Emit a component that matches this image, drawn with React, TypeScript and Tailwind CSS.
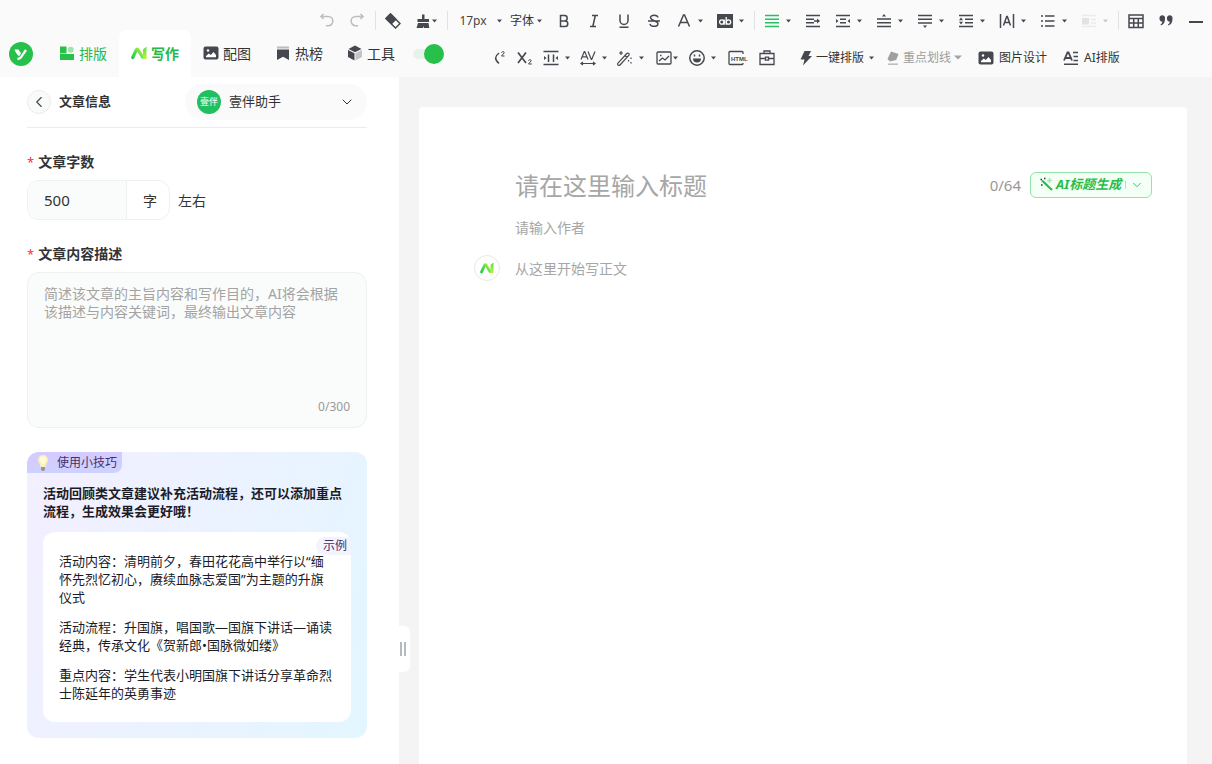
import React, { useState } from 'react';
import { ChevronDown, ChevronLeft } from 'lucide-react';

const INK = '#46484f';

const Svg = ({ children, w = 16, h = 16 }: any) => (
  <svg width={w} height={h} viewBox={`0 0 ${w} ${h}`} fill="none" stroke={INK} strokeWidth="1.5" className="shrink-0">
    {children}
  </svg>
);

const Caret = ({ className = 'text-[#46484f]' }: any) => (
  <svg width="5" height="4" viewBox="0 0 5 4" className={`shrink-0 ${className}`}><path d="M0 .5h5L2.500 3.500z" fill="currentColor" /></svg>
);

const BigCaret = () => (
  <svg width="8" height="5" viewBox="0 0 8 5" className="shrink-0"><path d="M0 .5h8L4 4.500z" fill="#a3a3a3" /></svg>
);

const Sep = () => <span className="flex h-5 w-1.5 shrink-0 justify-center"><span className="w-px bg-[#dfe1e6]" /></span>;

const Tool = ({ label, children }: any) => (
  <button type="button" aria-label={label} className="flex h-5 w-[30px] shrink-0 items-center justify-center">{children}</button>
);

const DropTool = ({ label, children, disabled }: any) => (
  <button type="button" aria-label={label} disabled={disabled} className="flex h-5 w-[41px] shrink-0 items-center gap-1.5 pl-[7px]">
    {children}
    <Caret className={disabled ? 'text-[#c8c8c8]' : 'text-[#46484f]'} />
  </button>
);

const DropToolSm = ({ label, children }: any) => (
  <button type="button" aria-label={label} className="flex h-5 w-[37px] shrink-0 items-center gap-1.5 pl-[5px]">
    {children}
    <Caret />
  </button>
);

// the two-stroke "AI" brand mark
const AiMark = ({ id, size = 16 }: any) => (
  <svg width={size} height={size} viewBox="0 0 16 16" fill="none" className="shrink-0">
    <defs>
      <linearGradient id={id + 'a'} x1="0" y1="14" x2="12" y2="4" gradientUnits="userSpaceOnUse">
        <stop stopColor="#1fc24a" /><stop offset=".45" stopColor="#42dc50" /><stop offset="1" stopColor="#c9f03c" />
      </linearGradient>
      <linearGradient id={id + 'b'} x1="0" y1="2" x2="0" y2="14" gradientUnits="userSpaceOnUse">
        <stop stopColor="#5fe04a" /><stop offset="1" stopColor="#c4ee3a" />
      </linearGradient>
    </defs>
    <path d="M1.800 12.500 5.300 5q.9-1.700 1.900 0l4.300 7" stroke={`url(#${id}a)`} strokeWidth="3.200" strokeLinecap="round" />
    <path d="M12 4.200 15.500 1.800V13.900h-3.500z" fill={`url(#${id}b)`} />
  </svg>
);

const PictureIcon = () => (
  <Svg>
    <rect x=".5" y="1.500" width="15" height="13" rx="2" fill={INK} stroke="none" />
    <circle cx="5" cy="5.500" r="1.200" fill="#fff" stroke="none" />
    <path d="M3 12.200V11l2.800-2.600 2 1.600L10.500 7 13 10v2.200z" fill="#fff" stroke="none" />
  </Svg>
);

const TABS = [
  {
    name: '排版', color: 'text-[#26b94a]',
    icon: (
      <Svg>
        <g stroke="none">
          <path d="M1 1.500h6.500v6.500H1zM1 9h14v6H1z" fill="#27c04a" />
          <circle cx="11.700" cy="4.700" r="3" fill="#9fe3ad" />
          <path d="M1 8h6.500v1H1z" fill="#9fe3ad" />
        </g>
      </Svg>
    ),
  },
  { name: '写作', color: 'text-[#26b94a]', icon: <AiMark id="tab" /> },
  { name: '配图', color: 'text-[#333]', icon: <PictureIcon /> },
  {
    name: '热榜', color: 'text-[#333]',
    icon: <Svg><path d="M2 1.500h12v2H2z" fill="#bbb" stroke="none" /><path d="M2 4.500h12V15l-6-3.200L2 15z" fill={INK} stroke="none" /></Svg>,
  },
  {
    name: '工具', color: 'text-[#333]',
    icon: (
      <Svg>
        <g stroke="none">
          <path d="M8 .5 14.500 4 8 7.300 1.500 4z" fill={INK} />
          <path d="M1 5l6.500 3.300V15.500L1 12z" fill={INK} />
          <path d="M15 5 8.500 8.300V15.500L15 12z" fill="#c4c4c4" />
        </g>
      </Svg>
    ),
  },
];

const EXAMPLES = [
  '活动内容：清明前夕，春田花花高中举行以“缅怀先烈忆初心，赓续血脉志爱国”为主题的升旗仪式',
  '活动流程：升国旗，唱国歌—国旗下讲话—诵读经典，传承文化《贺新郎•国脉微如缕》',
  '重点内容：学生代表小明国旗下讲话分享革命烈士陈延年的英勇事迹',
];

function TopTools() {
  return (
    <div className="flex h-[30px] items-center justify-end overflow-hidden pt-3 pr-px">
      <Tool label="撤销"><Svg><path d="M2.500 3.500h6.800a4.600 4.600 0 0 1 0 9.200H7M4.500 1 2 3.500 4.500 6" stroke="#bdbdbd" /></Svg></Tool>
      <Tool label="重做"><Svg><path d="M13.500 3.500H6.700a4.600 4.600 0 0 0 0 9.200H9M11.500 1 14 3.500 11.500 6" stroke="#bdbdbd" /></Svg></Tool>
      <Sep />
      <Tool label="清除格式">
        <Svg><path d="M1 5.500 5.500 1 15 10.500 10.500 15z" fill="#fff" /><path d="M1 5.500 5.500 1l5.300 5.300-4.500 4.500z" fill={INK} /></Svg>
      </Tool>
      <button type="button" aria-label="格式刷" className="flex h-5 w-9 shrink-0 items-center gap-px pl-[7px]">
        <Svg><path d="M7 1.500h2.500V6H14v3H2.500V6H7zM3 10h10.500l.8 5H9l-1-2v2H1.500z" fill={INK} stroke="none" /></Svg>
        <Caret />
      </button>
      <Sep />
      <button type="button" className="flex h-5 w-[60px] shrink-0 items-center gap-2.5 pl-[9px] text-[12px] text-[#444]"><span className="w-7">17px</span><Caret /></button>
      <button type="button" className="flex h-5 w-[39px] shrink-0 items-center gap-[3px] text-[12px] text-[#333]">字体<Caret /></button>
      <Tool label="加粗"><Svg><path d="M4.500 2.500h4a2.700 2.700 0 0 1 0 5.400h-4zM4.500 7.900H9a2.800 2.800 0 0 1 0 5.600H4.500z" /></Svg></Tool>
      <Tool label="斜体"><Svg><path d="M6 2.500h6M4 13.500h6M9.300 2.500l-2.500 11" /></Svg></Tool>
      <Tool label="下划线"><Svg><path d="M4 1.500v6a4 4 0 0 0 8 0v-6M3.500 14.200h9" /></Svg></Tool>
      <Tool label="删除线"><Svg><path d="M12 4.500C11.500 1.500 4.500 1.300 4.500 4.600 4.500 8 12 7.400 12 10.800c0 3.500-7.500 3.300-8 0M2 8h12" /></Svg></Tool>
      <DropTool label="文字颜色"><Svg><path d="M2.500 13.500 7.500 2h1l5 11.500M4.500 9.500h7" /></Svg></DropTool>
      <DropTool label="背景色">
        <Svg>
          <rect x="0" y="1" width="16" height="14" fill={INK} stroke="none" />
          <g stroke="#fff" strokeWidth="1.300"><circle cx="4.800" cy="9" r="2.200" /><path d="M7.200 6.500v5.200M9.200 4v7.700" /><circle cx="11.500" cy="9" r="2.200" /></g>
        </Svg>
      </DropTool>
      <Sep />
      <DropTool label="对齐"><Svg><path d="M1 2.500h14M1 6.200h14M1 9.800h14M1 13.500h14" stroke="#26bf62" /></Svg></DropTool>
      <Tool label="首行缩进"><Svg><path d="M1 2.500h14M1 6.200h8M1 9.800h8M1 13.500h14M9 8h4" /><path d="M12 5.500 15 8l-3 2.500z" fill={INK} stroke="none" /></Svg></Tool>
      <DropTool label="两端缩进"><Svg><path d="M1 2.500h14M5 6.200h6M5 9.800h6M1 13.500h14" /><path d="M1 6l2.500 2L1 10zM15 6l-2.500 2 2.500 2z" fill={INK} stroke="none" /></Svg></DropTool>
      <DropTool label="段前距"><Svg><path d="M1 6h14M1 9.700h14M1 13.400h14" /><path d="M8 1l2 2.500H6z" fill={INK} stroke="none" /></Svg></DropTool>
      <DropTool label="段后距"><Svg><path d="M1 2.500h14M1 6.200h14M1 9.900h14" /><path d="M8 15l2-2.500H6z" fill={INK} stroke="none" /></Svg></DropTool>
      <DropTool label="行间距"><Svg><path d="M1 2.500h14M7 6.200h8M7 9.800h8M1 13.500h14" /><path d="M3 4.500 5 7.300H1zM3 11.500 5 8.700H1z" fill={INK} stroke="none" /></Svg></DropTool>
      <DropTool label="字间距"><Svg><path d="M1.500 1v14M14.500 1v14M4.500 12.500 7.700 3.500h.6l3.200 9M5.800 9.500h4.400" /></Svg></DropTool>
      <DropTool label="列表"><Svg><path d="M5 3h9.500M5 8h9.500M5 13h9.500M1 3h2M1 8h2M1 13h2" /></Svg></DropTool>
      <DropTool label="浮动" disabled><Svg><path d="M1 2.500h14M10 6.500h5M10 10h5M1 13.500h14" stroke="#ececec" /><path d="M1 5h7v6.500H1z" fill="#e2e2e2" stroke="none" /></Svg></DropTool>
      <Sep />
      <Tool label="表格"><Svg><path d="M1 2h14v12.500H1zM1 5.500h14M1 10h14M5.700 5.500v9M10.300 5.500v9" /></Svg></Tool>
      <Tool label="引用"><Svg><path d="M1.500 5.500a2.800 2.800 0 1 1 5.500 0c0 4-1.500 6-4 7l-.5-1c1.200-.8 1.700-1.700 1.800-3A2.700 2.700 0 0 1 1.500 5.500zM9 5.500a2.800 2.800 0 1 1 5.500 0c0 4-1.500 6-4 7l-.5-1c1.200-.8 1.700-1.700 1.800-3A2.700 2.700 0 0 1 9 5.500z" fill={INK} stroke="none" /></Svg></Tool>
      <Tool label="分割线"><Svg><path d="M1 9h14" strokeWidth="2" /></Svg></Tool>
    </div>
  );
}

function BottomTools() {
  return (
    <div className="ml-[50px] flex items-center overflow-hidden pt-2 text-[12px] whitespace-nowrap text-[#333]">
      <button type="button" aria-label="上标" className="flex h-5 w-3 shrink-0 items-center">
        <Svg w={12}><path d="M5 3C.5 6.500.5 9.500 5 13.500" /><path d="M7.500 2.700c.3-1.500 3-1.300 2.700.2L7.500 6h3" strokeWidth="1" /></Svg>
      </button>
      <button type="button" aria-label="下标" className="flex h-5 w-8 shrink-0 items-center justify-end pr-[5px]">
        <Svg><path d="M1 2.500l8 10.500M9 2.500 1 13" strokeWidth="1.700" /><path d="M11.500 10.700c.3-1.500 3-1.300 2.700.2L11.500 14h3.300" strokeWidth="1" /></Svg>
      </button>
      <DropToolSm label="页边距"><Svg><path d="M.5 1.500h15M.5 14.500h15M5.500 4.500v7.500M10.500 4.500v7.500" /><path d="M1 6l2.500 2L1 10zM15 6l-2.500 2 2.500 2z" fill={INK} stroke="none" /></Svg></DropToolSm>
      <DropToolSm label="字距"><Svg><path d="M1 9.500 4.300 1.500h.4l3.300 8M2.300 6.800h4.400M8 1.500l3.300 8h.4l3.300-8" strokeWidth="1.200" /><path d="M1 13.500h14M3 12l-2 1.500L3 15M13 12l2 1.500-2 1.500" strokeWidth="1.200" /></Svg></DropToolSm>
      <DropToolSm label="魔法棒"><Svg><path d="M1 13.200 9.800 3.500a1.300 1.300 0 0 1 2 1.800L3 15a1.300 1.300 0 0 1-2-1.800zM8 5.500l2 1.800" strokeWidth="1.200" /><path d="M4 1v4M2 3h4M11.500 10v1.500M14 7.500V9M14 12v1.500" strokeWidth="1.200" /></Svg></DropToolSm>
      <button type="button" aria-label="图片" className="flex h-5 w-[35px] shrink-0 items-center justify-center gap-px">
        <Svg><rect x="1" y="2" width="14" height="12" rx="1" strokeWidth="1.300" /><path d="M3 11l3.500-3 2.500 2 4-4" strokeWidth="1.300" /><path d="M4 5.500h1.500" /></Svg>
        <Caret />
      </button>
      <DropToolSm label="表情"><Svg><circle cx="8" cy="8" r="7.200" /><path d="M4 8.500h8a4 4 0 0 1-8 0z" fill={INK} stroke="none" /><path d="M5.500 4.500V6.500M10.500 4.500V6.500" /></Svg></DropToolSm>
      <button type="button" aria-label="HTML" className="flex h-5 w-[34px] shrink-0 items-center justify-center">
        <Svg w={22}><path d="M16 4V2.500a1 1 0 0 0-1-1H3a1 1 0 0 0-1 1v11a1 1 0 0 0 1 1h12a1 1 0 0 0 1-1V13" strokeWidth="1.300" /><text x="4" y="11" fontSize="6" fontWeight="700" fontFamily="Liberation Sans" fill={INK} stroke="none">HTML</text></Svg>
      </button>
      <button type="button" aria-label="工具箱" className="flex h-5 w-6 shrink-0 items-center justify-center">
        <Svg><path d="M1 3.500h14v11H1zM5 3.500V1h6v2.500M1 8.500h5.500M9.500 8.500H15M6.500 7.200h3v3h-3z" strokeWidth="1.300" /></Svg>
      </button>
      <button type="button" className="ml-5 flex shrink-0 items-center gap-px">
        <Svg><path d="M5.500 1h6.500L9.500 6H13L4 15.500 5.500 9.500H1.500z" fill={INK} stroke="none" /></Svg>
        <span>一键排版</span>
        <span className="pl-1"><Caret /></span>
      </button>
      <button type="button" className="ml-3 flex shrink-0 items-center gap-px text-[#9c9c9c]">
        <Svg><path d="M5 1.500 12.500 4l-2.300 6L4 11.500 1.500 9z" fill="#a0a0a0" stroke="none" /><path d="M2 14.200h10" stroke="#bbb" /></Svg>
        <span>重点划线</span>
        <span className="pl-0.5"><BigCaret /></span>
      </button>
      <button type="button" className="ml-4 flex shrink-0 items-center gap-[5px]"><PictureIcon /><span>图片设计</span></button>
      <button type="button" className="ml-4 flex shrink-0 items-center gap-[5px]">
        <Svg><path d="M1 10.500 4.500 2.500h1l3.500 8M2.500 8h5" strokeWidth="1.800" /><path d="M10 2.500h5M10.500 6.500H15M10.500 10.500H15M1 14.200h14" /></Svg>
        <span>AI排版</span>
      </button>
    </div>
  );
}

function Sidebar() {
  const [count, setCount] = useState('500');
  const [desc, setDesc] = useState('');
  return (
    <aside className="w-[400px] shrink-0 border-r border-[#f4f4f4] bg-white pt-[7px] pr-8 pb-[26px] pl-[27px]">
      <div className="flex items-center justify-between border-b border-[#ececec] pb-[7px]">
        <div className="flex items-center gap-2">
          <button type="button" aria-label="返回" className="flex h-6 w-6 items-center justify-center rounded-full border border-[#ececec] bg-[#f9fbfa]">
            <ChevronLeft className="h-[18px] w-[18px] text-[#444]" strokeWidth={1.500} />
          </button>
          <h1 className="text-[13px] font-bold text-[#333]">文章信息</h1>
        </div>
        <button type="button" className="flex h-9 w-[182px] items-center rounded-full bg-[#fafafa] px-3 text-[13px] text-[#333]">
          <span className="flex h-6 w-6 items-center justify-center rounded-full bg-[#21bf5f] text-[9px] text-white">壹伴</span>
          <span className="ml-2">壹伴助手</span>
          <ChevronDown className="ml-auto h-4 w-4 text-[#333]" strokeWidth={1.500} />
        </button>
      </div>

      <label htmlFor="count" className="mt-6 flex gap-1 text-[14px] leading-5 font-bold text-[#333]">
        <span className="font-['Open_Sans'] text-[13px] font-normal text-[#f5222d]">*</span>文章字数
      </label>
      <div className="mt-2 flex items-center gap-2 text-[14px] text-[#333]">
        <div className="flex h-10 w-[143px] overflow-hidden rounded-xl border border-[#eef1f0]">
          <input id="count" value={count} onChange={(e) => setCount(e.target.value)}
            className="w-[99px] border-r border-[#eef1f0] bg-[#f9fcfb] pl-4 text-[15px] outline-none" />
          <span className="flex flex-1 items-center justify-center pl-1">字</span>
        </div>
        左右
      </div>

      <label htmlFor="desc" className="mt-6 flex gap-1 text-[14px] leading-5 font-bold text-[#333]">
        <span className="font-['Open_Sans'] text-[13px] font-normal text-[#f5222d]">*</span>文章内容描述
      </label>
      <div className="mt-2 flex h-[156px] flex-col rounded-xl border border-[#eef1f0] bg-[#f9fcfb] px-4 py-3">
        <textarea id="desc" value={desc} onChange={(e) => setDesc(e.target.value)} maxLength={300}
          placeholder="简述该文章的主旨内容和写作目的，AI将会根据该描述与内容关键词，最终输出文章内容"
          className="flex-1 resize-none text-[14px] leading-[18px] outline-none placeholder:text-[#a3a3a3]" />
        <span className="text-right text-[12px] leading-4 text-[#999]">{desc.length}/300</span>
      </div>

      <section className="mt-6 rounded-xl bg-linear-[110deg] from-[#f3efff] to-[#e3f6ff] px-4 pb-4">
        <div className="-mx-4 flex">
          <h2 className="flex h-[21px] items-center rounded-tl-xl rounded-br-lg bg-linear-to-b from-[#d5caff] to-[#cdd2ff] pr-[5px] pl-2 text-[12px] text-[#43306b]">
            <svg width="16" height="18" viewBox="0 0 16 18" className="mr-1.5">
              <path d="M8 1a5 5 0 0 0-5 5c0 2.500 2.200 4 2.600 7h4.800C10.800 10 13 8.500 13 6a5 5 0 0 0-5-5z" fill="#fdf0b4" />
              <path d="M8 2.500A3.500 3.500 0 0 0 4.800 6l2.400 4h2L11.200 6A3.500 3.500 0 0 0 8 2.500z" fill="#fffbe3" />
              <path d="M6 13h4v2.500L8.800 17H7.200L6 15.500z" fill="#9b93a0" />
            </svg>
            使用小技巧
          </h2>
        </div>
        <p className="mt-[11px] text-[13px] leading-[18px] font-bold text-[#1c1c28]">
          活动回顾类文章建议补充活动流程，还可以添加重点流程，生成效果会更好哦！
        </p>
        <div className="relative mt-3 space-y-3 rounded-xl bg-white px-4 py-5 text-[13px] leading-[18px] text-[#1c1c28]">
          <span className="absolute top-[5px] right-0 rounded-l-full bg-[#f3f3fe] pr-1 pl-[7px] text-[12px] text-[#43306b]">示例</span>
          {EXAMPLES.map((t) => <p key={t}>{t}</p>)}
        </div>
      </section>
    </aside>
  );
}

function Editor() {
  const [title, setTitle] = useState('');
  return (
    <main className="relative flex flex-1 bg-[#f4f4f4] pt-[30px] pr-[25px] pl-[19px]">
      <button type="button" aria-label="调整宽度" className="absolute top-[549px] -left-px flex h-[46px] w-[11px] items-center gap-0.5 rounded-r-md bg-white pl-px">
        <span className="h-[14px] w-0.5 bg-[#b4b8bf]" />
        <span className="h-[14px] w-0.5 bg-[#b4b8bf]" />
      </button>
      <div className="min-w-0 flex-1 rounded-t bg-white pt-[60px] pr-[35px]">
        <div className="flex items-center pl-24">
          <input aria-label="标题" placeholder="请在这里输入标题" value={title} onChange={(e) => setTitle(e.target.value)}
            className="h-9 min-w-0 flex-1 pt-0.5 text-[24px] outline-none placeholder:text-[#a6a6a6]" />
          <span className="mr-[9px] text-[15px] text-[#999]">{title.length}/64</span>
          <button type="button" className="flex h-[26px] w-[122px] items-center rounded-md border border-[#92e3a8] bg-[#f4fff6] pl-2 text-[13px] font-bold text-[#26bd4c]">
            <svg width="16" height="16" viewBox="0 0 16 16" className="mr-px shrink-0">
              <path d="M3 3.500 13 13" stroke="#26bd4c" strokeWidth="2.200" />
              <path d="M10.500 1v5M8 3.500h5" stroke="#a5e8b5" strokeWidth="1.600" />
              <path d="M5 1.500h1.500M1.500 2.500H3M2 8h1.500" stroke="#333" strokeWidth="1.300" />
            </svg>
            <span className="italic">AI标题生成</span>
            <span className="mr-1 ml-1 h-2 w-px shrink-0 bg-[#a8e6b8]" />
            <ChevronDown className="h-[14px] w-[14px] shrink-0" strokeWidth={1.500} />
          </button>
        </div>
        <div className="mt-3 pl-24">
          <input aria-label="作者" placeholder="请输入作者" className="block h-6 w-full text-[14px] outline-none placeholder:text-[#a6a6a6]" />
        </div>
        <div className="mt-4 flex items-center gap-[15px] pl-[55px]">
          <button type="button" aria-label="AI写作" className="flex h-[26px] w-[26px] items-center justify-center rounded-full border border-[#e8e8e8]">
            <AiMark id="body" size={14} />
          </button>
          <input aria-label="正文" placeholder="从这里开始写正文" className="h-6 flex-1 text-[14px] outline-none placeholder:text-[#a6a6a6]" />
        </div>
      </div>
    </main>
  );
}

export default function App() {
  const [tab, setTab] = useState('写作');
  const [on, setOn] = useState(true);

  return (
    <div lang="zh-CN" className="flex min-h-screen flex-col bg-white font-['Noto_Sans','Noto_Sans_CJK_SC',sans-serif]">
      <header className="bg-[#fafafa]">
        <TopTools />
        <div className="flex h-[47px]">
          <a href="#" aria-label="壹伴" className="flex w-[47px] shrink-0 items-center pl-[9px]">
            <svg width="24" height="24" viewBox="0 0 24 24">
              <circle cx="12" cy="12" r="12" fill="#27c04a" />
              <path d="M5.500 7.500H9.500L12 11.300 10.200 14.300C8 12.500 6.500 10.500 5.500 7.500z" fill="#fff" />
              <path d="M17 8 11.500 15.800Q10.500 17 8.500 16.700" fill="none" stroke="#fff" strokeWidth="2.300" />
            </svg>
          </a>
          <nav className="flex">
            {TABS.map((t) => (
              <button key={t.name} type="button" onClick={() => setTab(t.name)}
                className={`flex w-[72px] items-center justify-center gap-1 pb-px text-[14px] ${t.color} ${tab === t.name ? 'rounded-t-lg bg-white font-bold' : ''}`}>
                {t.icon}{t.name}
              </button>
            ))}
          </nav>
          <label className="ml-1.5 flex shrink-0 cursor-pointer items-center">
            <input type="checkbox" aria-label="开关" checked={on} onChange={(e) => setOn(e.target.checked)} className="peer sr-only" />
            <span className="flex h-2.5 w-[31px] items-center rounded-full bg-[#e6f3e9] peer-checked:justify-end">
              <span className="h-5 w-5 rounded-full bg-[#27c04a]" />
            </span>
          </label>
          <BottomTools />
        </div>
      </header>
      <div className="flex flex-1">
        <Sidebar />
        <Editor />
      </div>
    </div>
  );
}
